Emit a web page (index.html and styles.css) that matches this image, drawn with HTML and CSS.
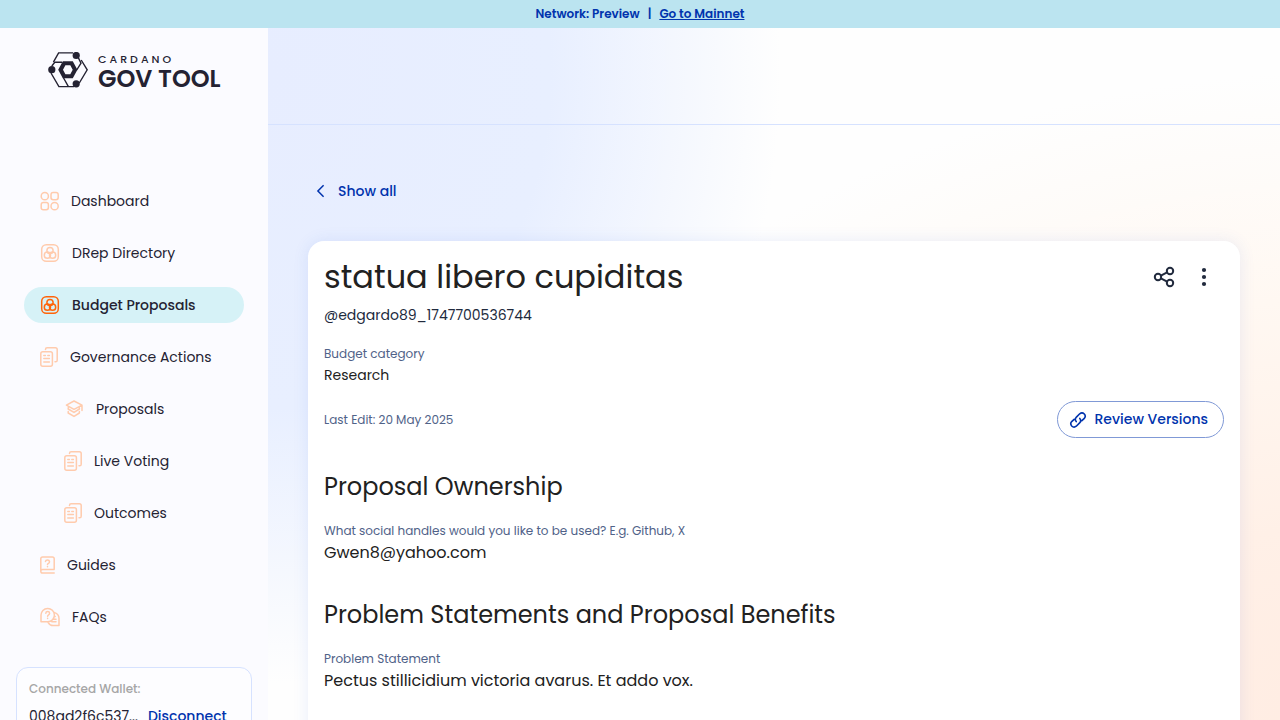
FILE: index.html
```
<!DOCTYPE html>
<html lang="en">
<head>
<meta charset="utf-8">
<meta name="viewport" content="width=device-width, initial-scale=1">
<title>Cardano GovTool</title>
<link rel="stylesheet" href="styles.css">
</head>
<body>
<svg class="sprite" aria-hidden="true">
  <symbol id="i-rings" viewBox="0 0 20 20">
    <rect x="1.7" y="1.7" width="16.6" height="16.6" rx="4.6"/>
    <circle cx="10" cy="7.6" r="3.1"/><circle cx="7.4" cy="12.2" r="3.1"/><circle cx="12.6" cy="12.2" r="3.1"/>
  </symbol>
  <symbol id="i-docs" viewBox="0 0 18 20">
    <path d="M5.5 2.6V2.4Q5.5 .8 7.1.8H15.4Q17.2.8 17.2 2.6V13.2Q17.2 14.8 15.6 14.8H15"/>
    <rect x=".8" y="4.8" width="11.6" height="14.4" rx="2"/>
    <path d="M3.8 8.5H5.4M7.8 8.5H9.4M3.8 11.6H9.4M3.8 15H9.4"/>
  </symbol>
</svg>
<div class="banner">
  <span>Network: Preview</span><span>|</span><a href="#mainnet">Go to Mainnet</a>
</div>
<div class="layout">
  <aside class="sidebar">
    <a class="logo" href="#home">
      <svg width="40" height="36" viewBox="0 0 40 36" aria-hidden="true">
        <g fill="none" stroke="#242232" stroke-width="1.4">
          <path d="M5.4 10.2L10.6 .9H25M33.2 8L39.2 17.8L31.3 31M26 34.6H10.9L3 21"/>
          <path d="M3.8 14L6.8 10.3H14M30.3 5.6L33 11.2L28.7 18M15.3 25.5L20.4 34.6"/>
        </g>
        <path fill="#242232" fill-rule="evenodd" d="M14.8 9.2H24.8L29.4 17.7L24.8 26.3H14.8L10.2 17.7ZM17.4 13.2L15 17.8L17.4 22.2H22.3L24.7 17.8L22.3 13.2Z"/>
        <g fill="#242232"><circle cx="3.8" cy="17.7" r="3.6"/><circle cx="28.2" cy="3.5" r="3.6"/><circle cx="28.2" cy="31.8" r="3.6"/></g>
      </svg>
      <span class="wordmark"><span class="mark-top">CARDANO</span><span class="mark-main">GOV TOOL</span></span>
    </a>
    <nav class="nav">
      <a href="#dashboard"><svg width="19" height="20" viewBox="0 0 19 20"><circle cx="4.8" cy="5.2" r="3.6"/><rect x="11" y="1.6" width="7.2" height="7.2" rx="2.2"/><rect x="1.2" y="11.6" width="7.2" height="7.2" rx="2.2"/><circle cx="14.6" cy="15.2" r="3.6"/></svg>Dashboard</a>
      <a href="#dreps"><svg width="20" height="20"><use href="#i-rings"/></svg>DRep Directory</a>
      <a class="active" href="#budget" aria-current="page"><svg width="20" height="20"><use href="#i-rings"/></svg>Budget Proposals</a>
      <a href="#governance"><svg width="18" height="20"><use href="#i-docs"/></svg>Governance Actions</a>
      <a class="sub" href="#proposals"><svg width="20" height="20" viewBox="0 0 20 20"><path d="M10 2L18 6.2L10 10.4L2.4 6.2ZM4.2 8.8V10L10 13.4L15.4 10V8.8M4.2 12.4V14L10 17.4L15.4 14V12.4M18 6.4V11.6"/></svg>Proposals</a>
      <a class="sub" href="#voting"><svg width="18" height="20"><use href="#i-docs"/></svg>Live Voting</a>
      <a class="sub" href="#outcomes"><svg width="18" height="20"><use href="#i-docs"/></svg>Outcomes</a>
      <a href="#guides"><svg width="15" height="20" viewBox="0 0 15 20"><path d="M14.2 13.8V3.8Q14.2 2 12.4 2H2.6Q.8 2 .8 3.8V16.2Q.8 18 2.6 18H14.2M1 15.2Q1.6 14.4 2.6 14.4H14.2M5.5 6.4Q5.7 5 7.5 5T9.5 6.7Q9.5 7.7 8.5 8.3Q7.5 8.8 7.5 9.6M7.5 11.6V11.8"/></svg>Guides</a>
      <a href="#faqs"><svg width="20" height="20" viewBox="0 0 20 20"><path d="M1 14.8V8.2A6.7 6.7 0 1 1 7.8 14.8ZM5.8 6.2Q5.9 4.6 7.7 4.6T9.6 6.2Q9.6 7.2 8.6 7.8T7.6 9.2M7.6 11.3V11.5M14.6 5.6A6.4 6.4 0 0 1 19 12V18.6H13Q10 18.6 8.2 15.6M14.8 9.6H15.2M13.6 12.2H16M11.8 14.8H16"/></svg>FAQs</a>
    </nav>
    <section class="wallet">
      <span class="wallet-label">Connected Wallet:</span>
      <div class="wallet-row"><span>008ad2f6c537...</span><button type="button">Disconnect</button></div>
    </section>
  </aside>
  <div class="page">
    <header class="topbar"></header>
    <main class="content">
      <a class="back" href="#all"><svg width="16" height="16" viewBox="0 0 16 16" fill="none" stroke="currentColor" stroke-width="1.5"><path d="M10.6 2.2L4.9 8L10.6 13.8"/></svg>Show all</a>
      <article class="card">
        <div class="title-row">
          <h1>statua libero cupiditas</h1>
          <div class="actions">
            <button type="button" aria-label="Share"><svg width="24" height="24" viewBox="0 0 24 24" fill="none" stroke="currentColor" stroke-width="2"><circle cx="18" cy="6" r="3.2"/><circle cx="6" cy="12" r="3.2"/><circle cx="18" cy="18" r="3.2"/><path d="M8.9 10.6L15.1 7.4M8.9 13.4L15.1 16.6"/></svg></button>
            <button type="button" aria-label="More options"><svg width="24" height="24" viewBox="0 0 24 24" fill="currentColor"><circle cx="12" cy="5" r="2.1"/><circle cx="12" cy="12" r="2.1"/><circle cx="12" cy="19" r="2.1"/></svg></button>
          </div>
        </div>
        <p class="author">@edgardo89_1747700536744</p>
        <p class="label">Budget category</p>
        <p class="category">Research</p>
        <div class="edit-row">
          <span class="label">Last Edit: 20 May 2025</span>
          <button class="review" type="button"><svg width="18" height="18" viewBox="0 0 18 18" fill="none" stroke="currentColor" stroke-width="1.6" stroke-linecap="round"><path d="M7.2 10.6Q5.3 8.2 7.4 6.1L10.7 2.8Q13.1.9 15.3 3Q17.2 5.2 15.3 7.4L12.9 9.7M10.8 7.4Q12.7 9.8 10.6 11.9L7.3 15.2Q4.9 17.1 2.7 15Q.8 12.8 2.7 10.6L5.1 8.3"/></svg>Review Versions</button>
        </div>
        <section>
          <h2>Proposal Ownership</h2>
          <p class="label">What social handles would you like to be used? E.g. Github, X</p>
          <p class="value">Gwen8@yahoo.com</p>
        </section>
        <section>
          <h2>Problem Statements and Proposal Benefits</h2>
          <p class="label">Problem Statement</p>
          <p class="value">Pectus stillicidium victoria avarus. Et addo vox.</p>
        </section>
      </article>
    </main>
  </div>
</div>
</body>
</html>
```
FILE: styles.css
```
* { box-sizing: border-box; }
html { scrollbar-width: none; }
body {
  margin: 0;
  min-height: 100vh;
  display: flex;
  flex-direction: column;
  font-family: Poppins, Inter, "Open Sans", sans-serif;
  font-size: 14px;
  color: #242232;
  background: #fff;
}
h1, h2, p { margin: 0; font-weight: 400; }
a { color: inherit; text-decoration: none; }
button { font: inherit; padding: 0; border: 0; background: none; cursor: pointer; }
svg { flex: none; }
.sprite { position: absolute; width: 0; height: 0; }

.banner {
  display: flex;
  justify-content: center;
  gap: 8px;
  padding: 4px 0;
  background: #bbe4f0;
  color: #0033ad;
  font-size: 12px;
  line-height: 20px;
  font-weight: 600;
}
.banner a { text-decoration: underline; }

.layout { display: flex; flex: 1; }
.sidebar {
  flex: 0 0 268px;
  display: flex;
  flex-direction: column;
  background: #fbfbff;
}
.logo { display: flex; gap: 10px; padding: 24px 40px 0 48px; height: 155px; }
.wordmark { display: flex; flex-direction: column; white-space: nowrap; }
.mark-top { font-size: 11px; line-height: 14px; font-weight: 500; letter-spacing: 3px; }
.mark-main { font-size: 24px; line-height: 26px; font-weight: 600; }

.nav { display: flex; flex-direction: column; gap: 16px; padding: 0 24px; }
.nav a {
  display: flex;
  align-items: center;
  gap: 12px;
  height: 36px;
  padding: 0 16px;
  border-radius: 18px;
  white-space: nowrap;
}
.nav .sub { padding-left: 40px; }
.nav svg {
  fill: none;
  stroke: #ffcbad;
  stroke-width: 1.5;
  stroke-linecap: round;
  stroke-linejoin: round;
}
.nav .active { background: #d6f2f7; font-weight: 500; }
.nav .active svg { stroke: #ff640a; }

.wallet {
  margin: 32px 16px 16px;
  padding: 12px;
  border: 1px solid #d6e2ff;
  border-radius: 12px;
  background: #fdfdff;
}
.wallet-label { display: block; font-size: 12px; line-height: 18px; font-weight: 500; color: #a6a6a6; }
.wallet-row { display: flex; gap: 10px; margin-top: 8px; line-height: 21px; }
.wallet-row button { color: #0033ad; font-weight: 500; }

.page {
  flex: 1;
  min-width: 0;
  background:
    radial-gradient(ellipse 40% 85% at 21% 10%, #e7edff 0, #e8efff 55%, rgba(232, 239, 255, 0) 100%) fixed,
    radial-gradient(ellipse 70% 90% at 105% 100%, #ffece2 0, #fff0e7 30%, #fff8f2 65%, rgba(255, 253, 250, 0) 100%) fixed,
    #fefefe;
}
.topbar { height: 97px; border-bottom: 1px solid #d6e2ff; }
.content { padding: 56px 40px 40px; }
.back {
  display: inline-flex;
  align-items: center;
  gap: 9px;
  height: 20px;
  padding-left: 5px;
  color: #0033ad;
  font-weight: 500;
}
.card {
  margin-top: 36px;
  padding: 16px;
  min-height: 560px;
  border-radius: 16px;
  background: #fff;
  box-shadow: 0 0 16px rgba(47, 98, 220, .1);
}
.title-row { display: flex; justify-content: space-between; align-items: center; }
h1 { font-size: 32px; line-height: 40px; color: #212121; }
.actions { display: flex; }
.actions button { width: 40px; height: 40px; padding: 8px; color: #212a3d; }
.author { margin-top: 8px; line-height: 20px; color: #212a3d; }
.label { font-size: 12px; line-height: 18px; color: #506288; }
.author + .label { margin-top: 20px; }
.category { line-height: 24px; color: #212121; }
.edit-row { display: flex; align-items: center; justify-content: space-between; margin-top: 14px; }
.review {
  display: flex;
  align-items: center;
  gap: 8px;
  height: 37px;
  padding: 0 15px 0 11px;
  border: 1px solid #8099d6;
  border-radius: 19px;
  color: #0033ad;
  font-weight: 500;
}
section h2 { padding: 32px 0 18px; font-size: 24px; line-height: 34px; color: #212121; }
.value { font-size: 16px; line-height: 26px; color: #212121; }
```
